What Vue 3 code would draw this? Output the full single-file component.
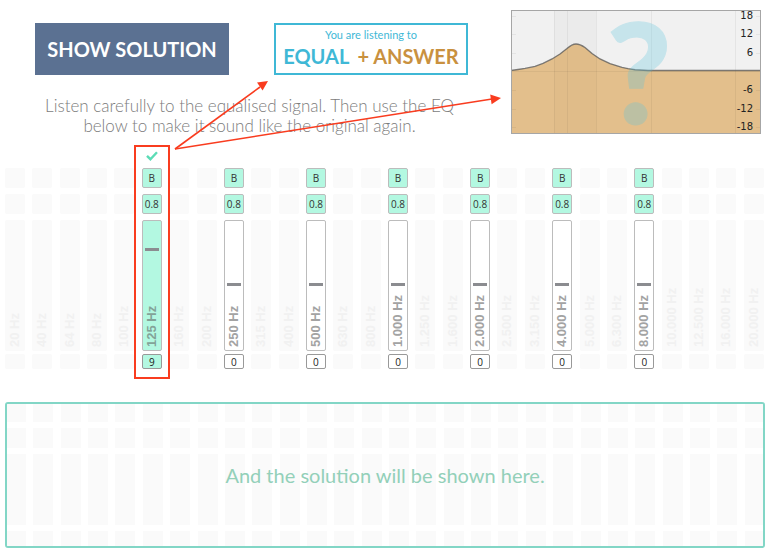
<script setup>
import { ref } from 'vue'

const frequencies = [
  20, 40, 64, 80, 100, 125, 160, 200, 250, 315, 400, 500, 630, 800,
  1000, 1250, 1600, 2000, 2500, 3150, 4000, 5000, 6300, 8000,
  10000, 12500, 16000, 20000
]
const enabled = [125, 250, 500, 1000, 2000, 4000, 8000]

const bands = ref(
  frequencies.map((hz) => ({
    hz,
    label: String(hz).replace(/(\d)(\d{3})$/, '$1.$2') + ' Hz',
    enabled: enabled.includes(hz),
    type: 'B',
    q: '0.8',
    gain: hz === 125 ? 9 : 0
  }))
)

const gridLines = [43, 56, 85, 140, 224]
const levels = [
  { text: '18', y: 6 },
  { text: '12', y: 24 },
  { text: '6', y: 43 },
  { text: '-6', y: 80 },
  { text: '-12', y: 99 },
  { text: '-18', y: 117 }
]
const curve =
  'M0 60.5 L7 59.5 L14 58.4 L24 56.4 L32 53.4 L41 49 L49 44 L56 38.5 Q61 34 65 34 Q69 34 74 37.5 L81 43.5 L89 49 L99 53.6 L111 57.4 L117 58.6 L124 59.8 L137 60.5 L250 60.5'
</script>

<template>
  <main class="page">
    <header class="top">
      <section class="intro">
        <div class="actions">
          <button class="solution-button" type="button">SHOW SOLUTION</button>
          <button class="listening" type="button">
            <span class="listening-caption">You are listening to</span>
            <span class="listening-mode"><span>EQUAL</span><span class="answer">+ ANSWER</span></span>
          </button>
        </div>
        <p class="instructions">
          Listen carefully to the equalised signal. Then use the EQ<br />below to make it sound like the original again.
        </p>
      </section>
      <svg class="chart" viewBox="0 0 250 124" role="img" aria-label="Equaliser response">
        <rect width="250" height="124" fill="#f1f1f1" />
        <rect x="43" width="42" height="124" fill="#ebebeb" />
        <path :d="curve + ' V124 H0 Z'" fill="#d69435" fill-opacity="0.54" />
        <g stroke="#000" stroke-opacity="0.05">
          <line v-for="x in gridLines" :key="x" :x1="x + 0.5" :x2="x + 0.5" y1="0" y2="124" />
          <line x1="0" x2="250" y1="61.5" y2="61.5" />
          <path v-for="l in levels" :key="l.y" :d="`M0 ${l.y + 0.5}h5M245 ${l.y + 0.5}h5`" />
        </g>
        <path :d="curve" fill="none" stroke="#555" stroke-opacity="0.75" stroke-width="1.4" />
        <text class="question" x="128" y="114" text-anchor="middle">?</text>
        <text v-for="l in levels" :key="l.text" class="level" x="242" :y="l.y + 3" text-anchor="end">{{ l.text }}</text>
        <rect x="0.5" y="0.5" width="249" height="123" fill="none" stroke="#a6a6a6" />
      </svg>
    </header>

    <section class="bands" aria-label="Equaliser">
      <div
        v-for="band in bands"
        :key="band.hz"
        class="band"
        :class="{ enabled: band.enabled, changed: band.gain !== 0 }"
      >
        <svg v-if="band.gain !== 0" class="check" viewBox="0 0 12 10" aria-hidden="true">
          <path d="M1 4.8 L4.4 8.2 L11 1.2" fill="none" stroke="#5cdcb6" stroke-width="2.4" />
        </svg>
        <template v-if="band.enabled">
          <button class="cell" type="button">{{ band.type }}</button>
          <button class="cell" type="button">{{ band.q }}</button>
          <div class="track">
            <input
              :id="'gain-' + band.hz"
              v-model.number="band.gain"
              class="slider"
              type="range"
              min="-15"
              max="15"
            />
            <label class="hz" :for="'gain-' + band.hz">{{ band.label }}</label>
          </div>
          <input v-model.number="band.gain" class="gain" type="text" :aria-label="band.label" />
        </template>
        <template v-else>
          <div class="cell"></div>
          <div class="cell"></div>
          <div class="track"><span class="hz">{{ band.label }}</span></div>
          <div class="gain"></div>
        </template>
      </div>
    </section>

    <section class="solution">
      <div class="solution-grid">
        <div v-for="band in bands" :key="band.hz" class="solution-band">
          <i></i><i></i><i></i><i></i>
        </div>
      </div>
      <p class="solution-text">And the solution will be shown here.</p>
    </section>

    <svg class="arrows" width="510" height="170" aria-hidden="true">
      <g stroke="#f93c1f" stroke-width="1.6" fill="none">
        <path d="M175 149 L260 87" />
        <path d="M175 149 L492 99" />
      </g>
      <g fill="#f93c1f">
        <path d="M268 81 L262.6 90.4 L257 82.6 Z" />
        <path d="M501 98 L491.6 104.2 L490.2 94.6 Z" />
      </g>
    </svg>
  </main>
</template>

<style>
body {
  background: #fff;
}
</style>

<style scoped>
.page {
  position: relative;
  padding: 10px 10px 5px 5px;
  font-family: Lato, "Liberation Sans", sans-serif;
}
button,
input {
  box-sizing: border-box;
  margin: 0;
  font-family: inherit;
}
.top {
  display: flex;
  align-items: flex-start;
  gap: 12px;
  margin: 0 3px 0 -5px;
}
.intro {
  flex: 1;
  padding-top: 13px;
}
.actions {
  display: flex;
  gap: 45px;
  padding-left: 35px;
}
.solution-button,
.listening {
  width: 194px;
  height: 52px;
  padding: 0;
  font-size: 20px;
  font-weight: 700;
  white-space: nowrap;
}
.solution-button {
  border: 0;
  background: #5b7192;
  color: #fff;
}
.listening {
  display: flex;
  flex-direction: column;
  align-items: center;
  justify-content: center;
  padding-bottom: 2px;
  border: 2px solid #3fb8d6;
  background: #fff;
  color: #3fb8d6;
}
.listening-caption {
  font-size: 11px;
  font-weight: 400;
  line-height: 16px;
}
.listening-mode {
  display: flex;
  gap: 8px;
  line-height: 26px;
}
.answer {
  color: #c9913f;
}
.instructions {
  margin: 21px 0 0;
  color: #7c7c7c;
  font-size: 17px;
  font-weight: 300;
  line-height: 20px;
  text-align: center;
}
.chart {
  display: block;
  width: 250px;
  height: 124px;
  overflow: visible;
}
.question {
  fill: #5bc5de;
  stroke: #5bc5de;
  stroke-width: 1;
  opacity: 0.28;
  font: 900 140px Lato, sans-serif;
}
.level {
  fill: #222;
  font: 10px "DejaVu Sans", sans-serif;
}
.bands {
  display: flex;
  justify-content: space-between;
  margin-top: 32px;
}
.band {
  position: relative;
  display: flex;
  flex-direction: column;
  width: 20px;
}
.cell,
.track,
.gain {
  box-sizing: border-box;
  width: 20px;
  border: 0 solid #bcbcbc;
  border-radius: 2px;
  background: #fafafa;
}
.cell {
  height: 20px;
  margin-bottom: 6px;
  padding: 0;
  color: #333;
  font: 10px/18px "Open Sans", sans-serif;
  text-align: center;
}
.track {
  position: relative;
  height: 131px;
  margin-bottom: 3px;
}
.gain {
  height: 15px;
  padding: 0;
  color: #222;
  font: 10px/13px "Open Sans", sans-serif;
  text-align: center;
}
.enabled .cell,
.enabled .track,
.enabled .gain {
  border-width: 1px;
}
.enabled .gain {
  border-color: #999;
}
.enabled .cell,
.changed .track,
.changed .gain {
  background: #b3f8e1;
}
.enabled:not(.changed) .track,
.enabled:not(.changed) .gain {
  background: #fff;
}
.hz {
  position: absolute;
  inset: 0;
  padding-top: 4px;
  color: #f1f1f1;
  font: 700 13px/20px "Liberation Sans", sans-serif;
  white-space: nowrap;
  writing-mode: vertical-rl;
  transform: rotate(180deg);
  pointer-events: none;
}
.enabled .hz {
  padding-top: 3px;
  color: #a3a3a3;
  line-height: 18px;
}
.changed .hz {
  color: #83a398;
}
.slider {
  display: block;
  width: 18px;
  height: 119px;
  margin: 4px 0;
  appearance: none;
  background: transparent;
  writing-mode: vertical-lr;
  direction: rtl;
}
.slider::-webkit-slider-thumb {
  width: 14px;
  height: 3px;
  appearance: none;
  border: 0;
  border-radius: 0;
  background: #8b8c90;
}
.check {
  position: absolute;
  top: -17px;
  left: 4px;
  width: 12px;
  height: 10px;
}
.changed::after {
  content: "";
  position: absolute;
  inset: -23px -8px -10px;
  z-index: 1;
  border: 2px solid #f93c1f;
  pointer-events: none;
}
.solution {
  position: relative;
  margin: 33px -1px 0 0;
  overflow: hidden;
  border: 2px solid #82d6c6;
  border-radius: 3px;
}
.solution-grid {
  display: flex;
  justify-content: space-between;
  margin: 0 -2px 0 -1px;
}
.solution-band {
  display: grid;
  grid-template-rows: 18px 20px 71px 15px;
  gap: 6px;
  width: 20px;
}
.solution-band i {
  background: #fafafa;
}
.solution-text {
  position: absolute;
  inset: 0;
  display: flex;
  align-items: center;
  justify-content: center;
  margin: 0;
  color: #93d0b9;
  font-size: 20px;
}
.arrows {
  position: absolute;
  top: 0;
  left: 0;
  pointer-events: none;
}
</style>
